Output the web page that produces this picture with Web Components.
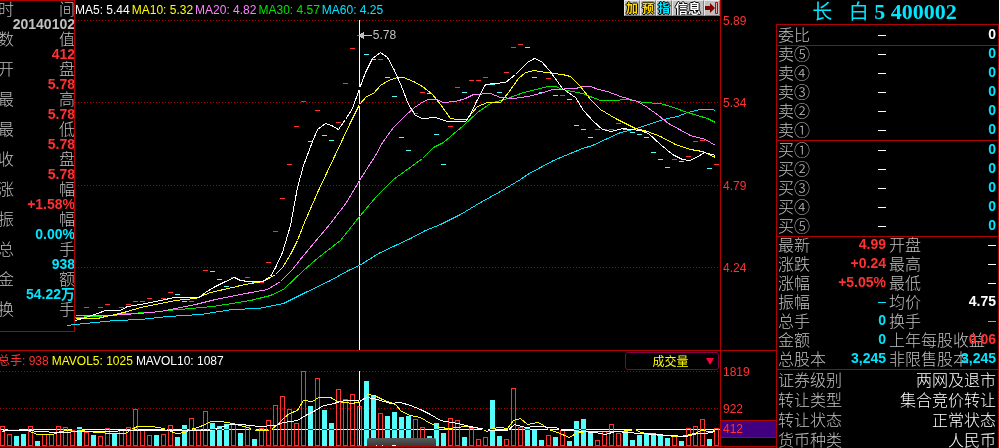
<!DOCTYPE html>
<html lang="zh-CN">
<head>
<meta charset="utf-8">
<title>长白5 400002</title>
<style>
html, body { margin: 0; height: 100%; background: #000; }
body { font-family: "Liberation Sans", "Noto Sans CJK SC", sans-serif; font-size: 12px; overflow: hidden;
  --line: #b00000; --red: #ff3232; --cyan: #00e6ff; --grey: #c0c0c0; --yellow: #ffff00; }
</style>
</head>
<body>
<stock-terminal></stock-terminal>
<script>
const define = (name, html, setup) => {
  const t = document.createElement('template');
  t.innerHTML = html;
  customElements.define(name, class extends HTMLElement {
    constructor() {
      super();
      this.attachShadow({ mode: 'open' }).append(t.content.cloneNode(true));
    }
    connectedCallback() { if (setup) setup(this, this.shadowRoot); }
  });
};

/* Each day takes seven units across; R is a rise, C a fall, the number is the top edge */
const STEP = 7;
const volumes = 'R426 R434 C436 C434 R426 C441 R434 R434 R426 R427 R430 C427 R432 C435 R436 R428 C433 R430 R427 R409 R430 R435 C435 R434 R425 C437 C425 R418 R429 R411 C423 C426 C424 R424 C433 R425 C439 R428 R420 R405 R396 R409 R423 R371 C406 R378 C410 C423 R389 R399 R394 R406 C381 C395 R413 C416 C412 C417 C416 R419 R427 C436 C423 C433 R418 R420 C437 R428 R439 R437 C400 C436 R439 R388 R427 C428 C430 C440 R435 C437 R430 C441 C421 C419 C431 R440 R431 R424 R433 C431 C440 C435 C433 C433 C436 C438 R435 C441 R428 R426 R419 C439 R428'.split(' ');
const ticks = '84R307 98R307 105R304 119R307 126R304 133R301 140R301 147R298 161R298 168R292 175C294 182C301 189R301 203R270 210C271 217C279 224C286 231R277 238C285 245R277 252C282 259R282 266R262 273R231 280R198 287R164 294R126 301R101 308C141 315R110 322C135 329C140 336R122 343R83 350R48 357R35 364C54 371C59 378R59 385C77 392C96 399C137 406C150 413R113 420R92 427C93 434C134 441C164 448R126 455R87 462C92 469R80 476R80 483R77 490C84 497C92 504R72 511R47 518R44 525C47 532C77 539C92 546R78 553C95 560R95 567C99 574C125 581C129 588C137 595R129 602R129 609R129 616R123 623C129 630C132 637C134 644C137 651C152 658C159 665C167 672R159 679C161 686R156 693R141 700R140 707C168 714R164'.split(' ');
const tickMarks = ticks.map(s => {
  const [, x, c, y] = s.match(/(\d+)([RC])(\d+)/);
  return `<rect class="${c}" x="${x}" y="${y}" width="5" height="1"/>`;
}).join('');
const bars = volumes.map((s, i) => {
  const y = +s.slice(1), x = i * STEP;
  return s[0] === 'C'
    ? `<rect class="C" x="${x}" y="${y}" width="5" height="${446 - y}"/>`
    : `<path class="R" fill-rule="evenodd" d="M${x} ${y}h5V446h-5zM${x + 1} ${y + 1}V445h3V${y + 1}z"/>`;
}).join('');

const plotCss = `
  svg { display: block; width: 100%; background: #000; shape-rendering: crispEdges; }
  polyline, .grid { fill: none; stroke-width: 1; vector-effect: non-scaling-stroke; }
  .grid { stroke: var(--line); stroke-dasharray: 1 2; }
  .R { fill: var(--red); } .C { fill: #54fcfc; }
  .cursor { fill: #fff; mix-blend-mode: difference; }`;

define('legend-bar', `<style>
  :host { display: flex; gap: 3px; line-height: 14px; white-space: nowrap; }
</style><slot></slot>`);

define('cursor-info', `<style>
  :host { display: block; box-sizing: border-box; height: 332px; overflow: hidden; border: 1px solid var(--line); border-left: 0; color: var(--grey); }
  dl { margin: 0 -1px 0 -2px; }
  div { height: 30px; }
  dt { display: flex; justify-content: space-between; font: 300 16px/14px "Noto Sans CJK SC", sans-serif; }
  dd { margin: 0; padding-top: 2px; text-align: right; font-weight: bold; font-size: 14px; line-height: 14px; white-space: nowrap; }
  .r { color: var(--red); } .c { color: var(--cyan); }
</style><dl></dl>`, (el, root) => {
  const rows = [['时间', '20140102', ''], ['数值', '412', 'r'], ['开盘', '5.78', 'r'], ['最高', '5.78', 'r'], ['最低', '5.78', 'r'],
    ['收盘', '5.78', 'r'], ['涨幅', '+1.58%', 'r'], ['振幅', '0.00%', 'c'], ['总手', '938', 'c'], ['金额', '54.22万', 'c'], ['换手', '', '']];
  root.querySelector('dl').innerHTML = rows.map(([k, v, c]) =>
    `<div><dt><span>${k[0]}</span><span>${k[1]}</span></dt><dd class="${c}">${v}</dd></div>`).join('');
});

define('tool-bar', `<style>
  :host { display: flex; height: 16px; background: var(--grey); }
  button { box-sizing: border-box; height: 16px; width: 16px; padding: 0; border: 1px solid; border-color: #e8e8e8 #808080 #808080 #e8e8e8;
    background: var(--grey); font: bold 12px/14px "Noto Sans CJK SC", sans-serif; color: #ffd800; overflow: hidden;
    text-shadow: 1px 0 #000, -1px 0 #000, 0 1px #000, 0 -1px #000; }
  .i { color: var(--cyan); }
  .w { width: 32px; color: #fff; font-size: 13px; }
  svg { display: block; margin: auto; }
</style>
<button>加</button><button>预</button><button class="i">指</button><button class="w">信息</button>
<button aria-label="收起"><svg width="14" height="14" viewBox="0 0 14 14"><path fill="#800000" d="M0 5h5V2l5 5-5 5V9H0z"/><path fill="#e0b0b0" stroke="#c00000" d="M10.5 1.5h2v11h-2z"/></svg></button>`);

define('price-plot', `<style>
  :host { display: block; position: relative; height: 350px; min-width: 0; }
  ${plotCss}
  svg { height: 100%; overflow: visible; }
  header { position: absolute; inset: 0 0 auto 0; display: flex; justify-content: space-between; align-items: flex-start; }
  legend-bar { padding-top: 3px; gap: 2px; }
  .w { color: #fff; } .y { color: var(--yellow); } .m { color: #ff80ff; } .g { color: #00e600; } .c { color: var(--cyan); }
  .tip { position: absolute; left: 44%; top: 28px; display: flex; align-items: center; gap: 1px; line-height: 15px; color: var(--grey); }
  .tip svg { width: 13px; height: 7px; background: none; }
</style>
<svg viewBox="75 0 645 350" preserveAspectRatio="none" role="img" aria-label="K线">
  <path class="grid" d="M75 20.5H720M75 102.5H720M75 185.5H720M75 267.5H720"/>
  ${tickMarks}
  <g transform="translate(.5 .5)">
  <polyline stroke="#00e6ff" points="67,325 75,324 95,322 115,320 140,319 167,316 200,314 232,309 258,308 283,303 303,293 330,280 348,270 359,265 378,253 395,245 410,238 425,230 440,224 460,214 480,202 500,191 520,179 527,174 553,160 582,148 592,145 620,132 633,129 645,125 663,119 677,116 687,112 700,109 712,109 715,110"/>
  <polyline stroke="#00e600" points="75,317 110,315 125,313 150,312 167,310 190,308 212,306 232,303 250,300 270,295 283,289 303,270 318,257 340,240 359,216 376,196 393,179 422,158 433,147 443,142 463,125 477,112 490,103 507,98 523,92 540,88 547,86 555,86 562,89 582,93 600,100 612,100 627,99 643,102 660,103 670,106 687,112 707,118 715,122"/>
  <polyline stroke="#ff80ff" points="75,315 110,315 138,313 160,311 180,307 195,304 215,299 240,294 267,289 280,281 292,269 303,255 330,223 346,202 359,180 375,155 382,142 393,127 405,115 414,107 423,101 428,99 437,99 442,102 455,101 465,98 473,94 490,93 500,97 513,98 527,96 540,93 552,89 575,88 583,86 590,86 598,89 607,91 620,96 637,101 647,107 658,115 668,123 690,135 705,139 715,145"/>
  <polyline stroke="#ffff00" points="75,318 97,318 105,316 115,314 127,311 140,307 160,303 175,300 195,298 210,292 232,287 245,284 262,281 270,277 275,274 282,267 290,254 297,240 304,222 318,190 342,139 350,122 359,104 366,96 373,93 380,85 388,80 397,77 403,77 413,81 422,86 432,94 440,104 450,118 457,119 466,119 477,106 487,102 500,102 508,92 518,78 525,72 534,70 545,72 562,74 570,76 580,86 590,99 600,109 615,118 635,128 647,131 660,136 675,144 690,149 702,151 715,157"/>
  <polyline stroke="#fff" points="75,320 85,317 97,313 105,310 120,310 127,306 140,304 150,302 160,300 174,297 199,297 205,292 215,286 225,281 234,277 240,280 248,281 262,281 270,276 275,267 282,252 290,225 297,187 303,165 312,141 317,129 325,123 331,125 338,129 345,119 352,108 359,88 365,72 372,58 380,52 387,57 394,70 401,86 408,104 415,115 422,118 435,117 447,121 465,121 470,114 476,101 485,84 505,82 515,74 527,62 534,58 541,61 549,70 562,88 575,97 583,110 593,121 602,129 611,131 622,128 640,130 648,133 660,144 672,154 682,159 689,160 696,157 704,152 715,155"/>
  </g>
  <rect class="cursor" x="359" y="20" width="1" height="330"/>
</svg>
<div class="tip"><svg viewBox="0 0 13 7"><path fill="#c0c0c0" d="M0 3l5-3v3h8v1H5v3L0 4z"/></svg><span>5.78</span></div>
<header>
  <legend-bar><span class="w">MA5: 5.44</span><span class="y">MA10: 5.32</span><span class="m">MA20: 4.82</span><span class="g">MA30: 4.57</span><span class="c">MA60: 4.25</span></legend-bar>
  <tool-bar></tool-bar>
</header>`);

define('price-axis', `<style>
  :host { display: flex; flex-direction: column; box-sizing: border-box; height: 350px; padding: 14px 0 7px 2px; border-left: 1px solid var(--line); color: var(--red); line-height: 15px; }
  ::slotted(span) { flex: 1; }
</style><slot></slot>`);

define('indicator-select', `<style>
  :host { display: block; position: relative; width: 94px; }
  select { appearance: none; display: block; box-sizing: border-box; width: 100%; height: 18px; margin: 0; padding: 0 3px 0 0; background: #000;
    border: 1px solid #80004c; border-radius: 3px; color: var(--yellow); font: 12px/16px "Noto Sans CJK SC", sans-serif; text-align: center; text-align-last: center; }
  svg { position: absolute; right: 5px; top: 6px; pointer-events: none; }
</style>
<select aria-label="指标"><option>成交量</option></select>
<svg width="8" height="7" viewBox="0 0 8 7"><path fill="#ff0040" d="M0 0h8L4 7z"/></svg>`);

define('volume-plot', `<style>
  :host { display: block; position: relative; min-width: 0; overflow: hidden; }
  ${plotCss}
  svg.plot { height: 75px; }
  header { display: flex; justify-content: space-between; align-items: center; height: 20px; padding-right: 1px; }
  legend-bar { margin-left: -2px; }
  .r { color: var(--red); } .y { color: var(--yellow); } .w { color: #fff; }
  .pop { position: absolute; left: 51%; bottom: 0; width: 69px; height: 8px; background: linear-gradient(#585858, #383838); border-radius: 2px 2px 0 0; }
  .pop svg { height: 8px; background: none; }
</style>
<header>
  <legend-bar><span class="r">总手: 938</span><span class="y">MAVOL5: 1025</span><span class="w">MAVOL10: 1087</span></legend-bar>
  <indicator-select></indicator-select>
</header>
<svg class="plot" viewBox="0 371 720 75" preserveAspectRatio="none" role="img" aria-label="成交量">
  <path class="grid" d="M0 371.5H720M0 408.5H720"/>
  ${bars}
  <g transform="translate(.5 .5)">
  <polyline stroke="#ffff00" points="2,431 10,429 27,430 37,434 52,434 60,431 75,429 87,431 110,433 125,433 131,429 137,426 152,426 163,428 168,430 176,433 185,432 190,429 197,427 205,424 210,421 220,421 232,423 240,425 247,427 252,429 258,430 265,430 271,429 277,424 283,418 289,413 297,410 303,400 312,401 318,397 330,397 337,401 352,403 360,401 367,394 374,395 382,399 395,404 401,411 410,415 420,417 430,423 440,427 448,428 465,426 480,428 487,431 492,428 500,427 507,428 513,420 520,418 527,424 537,422 542,424 548,429 557,432 569,437 577,432 590,431 620,431 635,429 640,432 660,435 680,436 690,434 697,432 700,430 710,431 715,430"/>
  <polyline stroke="#fff" points="2,430 30,430 37,431 60,432 82,431 110,431 125,430 133,430 150,430 167,430 180,430 210,430 220,427 230,424 240,424 250,425 258,426 275,425 283,422 297,420 305,415 315,410 323,405 330,404 340,401 345,400 360,400 367,397 377,399 390,403 400,402 410,405 420,409 430,414 440,420 457,423 470,426 480,428 490,430 500,430 507,430 514,424 525,427 535,426 556,427 561,430 570,430 580,431 595,432 605,434 615,431 640,433 670,435 685,436 697,433 705,433 715,431"/>
  </g>
  <rect class="cursor" x="0" y="429" width="720" height="1"/>
  <rect class="cursor" x="359" y="371" width="1" height="75"/>
</svg>
<div class="pop"><svg viewBox="0 0 69 8"><path fill="#fff" d="M9 7h1v1H9zM15 7h1v1h-1zM25 7h4v1h-4z"/></svg></div>`);

define('volume-axis', `<style>
  :host { display: flex; flex-direction: column; color: var(--red); line-height: 14px; border-left: 1px solid var(--line); }
  span { padding-left: 2px; }
  .a { margin-top: 14px; } .b { margin-top: 23px; }
  .cur { box-sizing: border-box; height: 18px; margin-top: 4px; padding-top: 1px; background: #400080; border: solid var(--line); border-width: 1px 0; }
</style><span class="a">1819</span><span class="b">922</span><span class="cur">412</span>`);

const tableCss = `
  :host { display: block; border-top: 1px solid var(--line); }
  table { width: 100%; border-collapse: collapse; table-layout: fixed; margin-top: -1px; }
  th, td { padding: 0; white-space: nowrap; line-height: 16px; height: 19px; vertical-align: top; }
  th { text-align: left; font: 300 16px/16px "Noto Sans CJK SC", sans-serif; color: var(--grey); }
  td { text-align: right; font-weight: bold; font-size: 14px; color: #fff; }
  .r { color: var(--red); } .c { color: var(--cyan); } .w { color: #fff; }
  i { display: inline-block; width: 8px; height: 1px; background: currentColor; vertical-align: middle; }`;
const cell = v => v === '-' ? '<i role="img" aria-label="无"></i>' : v;

define('order-book', `<style>${tableCss}
  col:last-child { width: 110px; }
</style><table><colgroup><col><col><col></colgroup><tbody></tbody></table>`, (el, root) => {
  const tone = el.getAttribute('tone');
  root.querySelector('tbody').innerHTML = el.getAttribute('rows').split(' ').map(k =>
    `<tr><th scope="row">${k}</th><td>${cell('-')}</td><td class="${tone}">0</td></tr>`).join('');
});

define('quote-grid', `<style>${tableCss}
  col.k { width: 50px; } col.k2 { width: 53px; } col.v2 { width: 57px; }
  th:nth-child(3) { padding-left: 3px; }
</style><table><colgroup><col class="k"><col><col class="k2"><col class="v2"></colgroup><tbody></tbody></table>`, (el, root) => {
  const rows = [['最新', '4.99', 'r', '开盘', '-', 'w'], ['涨跌', '+0.24', 'r', '最高', '-', 'w'], ['涨幅', '+5.05%', 'r', '最低', '-', 'w'],
    ['振幅', '-', 'c', '均价', '4.75', 'w'], ['总手', '0', 'c', '换手', '-', 'c'], ['金额', '0', 'c', '上年每股收益', '0.06', 'r'], ['总股本', '3,245', 'c', '非限售股本', '3,245', 'c']];
  root.querySelector('tbody').innerHTML = rows.map(r =>
    `<tr><th scope="row">${r[0]}</th><td class="${r[2]}">${cell(r[1])}</td><th scope="row">${r[3]}</th><td class="${r[5]}">${cell(r[4])}</td></tr>`).join('');
});

define('security-facts', `<style>${tableCss}
  th, td { height: 20px; font: 300 16px/20px "Noto Sans CJK SC", sans-serif; }
</style><table><tbody></tbody></table>`, (el, root) => {
  const rows = [['证券级别', '两网及退市'], ['转让类型', '集合竞价转让'], ['转让状态', '正常状态'], ['货币种类', '人民币']];
  root.querySelector('tbody').innerHTML = rows.map(([k, v]) => `<tr><th scope="row">${k}</th><td>${v}</td></tr>`).join('');
});

define('quote-panel', `<style>
  :host { display: flex; flex-direction: column; min-height: 0; overflow: hidden; border-right: 1px solid #fff; }
  h1 { margin: 0; flex: none; height: 24px; padding-right: 6px; text-align: center; white-space: pre; color: var(--cyan); font: bold 22px/24px "Liberation Serif", "Noto Sans CJK SC", serif; }
  h1 span { font-size: 20px; font-weight: normal; }
  section { flex: 1 0 auto; border: solid var(--line); border-width: 0 1px; }
  order-book, quote-grid, security-facts { padding: 0 2px 0 1px; }
  .head { padding-top: 2px; }
  .buy { padding-top: 1px; }
</style>
<h1><span>长</span>   <span>白</span> 5 400002</h1>
<section>
  <order-book class="head" tone="w" rows="委比"></order-book>
  <order-book tone="c" rows="卖⑤ 卖④ 卖③ 卖② 卖①"></order-book>
  <order-book class="buy" tone="c" rows="买① 买② 买③ 买④ 买⑤"></order-book>
  <quote-grid></quote-grid>
  <security-facts></security-facts>
</section>`);

define('stock-terminal', `<style>
  :host { display: grid; grid-template-columns: minmax(0, 1fr) 224px; height: 100vh; overflow: hidden; }
  .price { display: grid; grid-template-columns: 75px minmax(0, 1fr) 56px; }
  .volume { display: grid; grid-template-columns: minmax(0, 1fr) 56px; border: solid var(--line); border-width: 1px 0; }
</style>
<main>
  <section class="price">
    <cursor-info></cursor-info>
    <price-plot></price-plot>
    <price-axis><span>5.89</span><span>5.34</span><span>4.79</span><span>4.24</span></price-axis>
  </section>
  <section class="volume">
    <volume-plot></volume-plot>
    <volume-axis></volume-axis>
  </section>
</main>
<quote-panel></quote-panel>`);
</script>
</body>
</html>
